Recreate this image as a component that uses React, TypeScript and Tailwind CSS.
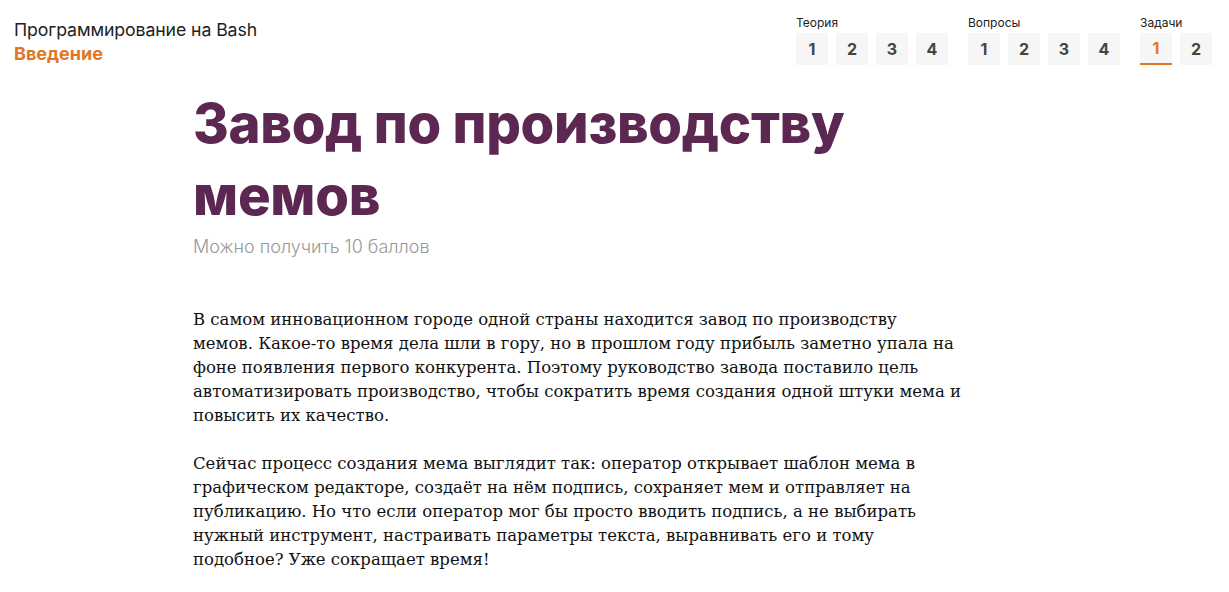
import React from "react";

const groups = [
  { label: "Теория", items: ["1", "2", "3", "4"], active: -1 },
  { label: "Вопросы", items: ["1", "2", "3", "4"], active: -1 },
  { label: "Задачи", items: ["1", "2"], active: 0 },
];

const p1 = [
  "В самом инновационном городе одной страны находится завод по производству",
  "мемов. Какое-то время дела шли в гору, но в прошлом году прибыль заметно упала на",
  "фоне появления первого конкурента. Поэтому руководство завода поставило цель",
  "автоматизировать производство, чтобы сократить время создания одной штуки мема и",
  "повысить их качество.",
];
const p2 = [
  "Сейчас процесс создания мема выглядит так: оператор открывает шаблон мема в",
  "графическом редакторе, создаёт на нём подпись, сохраняет мем и отправляет на",
  "публикацию. Но что если оператор мог бы просто вводить подпись, а не выбирать",
  "нужный инструмент, настраивать параметры текста, выравнивать его и тому",
  "подобное? Уже сокращает время!",
];

export default function App() {
  return (
    <div className="min-h-[592px] bg-white" style={{ fontFamily: "Inter, 'Noto Sans', sans-serif" }}>
      <header className="flex justify-between pl-[14px] pr-[17px]">
        <div className="pt-[19px]">
          <div className="text-[17.7px] leading-[22px] text-[#222] font-normal tracking-[-0.1px]">Программирование на Bash</div>
          <div className="text-[18px] leading-[26px] font-bold text-[#e0761f]">Введение</div>
        </div>
        <nav className="flex gap-[20px] pt-[15px]">
          {groups.map((g) => (
            <div key={g.label}>
              <div className="text-[12px] leading-[16px] text-[#222] mb-[2px]">{g.label}</div>
              <div className="flex gap-[8px]">
                {g.items.map((it, i) => (
                  <div
                    key={i}
                    className={
                      "w-[32px] h-[32px] flex items-center justify-center text-[16px] font-bold bg-[#f6f6f6] " +
                      (i === g.active ? "text-[#e0761f] border-b-2 border-[#e0761f]" : "text-[#444]")
                    }
                  >
                    {it}
                  </div>
                ))}
              </div>
            </div>
          ))}
        </nav>
      </header>
      <main className="ml-[193px] w-[780px] pt-[20px]">
        <h1 className="text-[54.5px] leading-[72px] font-extrabold text-[#5c2751] tracking-[-0.3px]">
          Завод по производству
          <br />
          мемов
        </h1>
        <div className="text-[18px] leading-[24px] text-[#999] mt-[4px] font-light">Можно получить 10 баллов</div>
        <div
          className="mt-[49px] text-[16.5px] leading-[24px] text-[#111]"
          style={{ fontFamily: "'DejaVu Serif', serif" }}
        >
          <p className="mb-[24px]">
            {p1.map((l, i) => (
              <span key={i} className="block whitespace-nowrap">{l}</span>
            ))}
          </p>
          <p>
            {p2.map((l, i) => (
              <span key={i} className="block whitespace-nowrap">{l}</span>
            ))}
          </p>
        </div>
      </main>
    </div>
  );
}
